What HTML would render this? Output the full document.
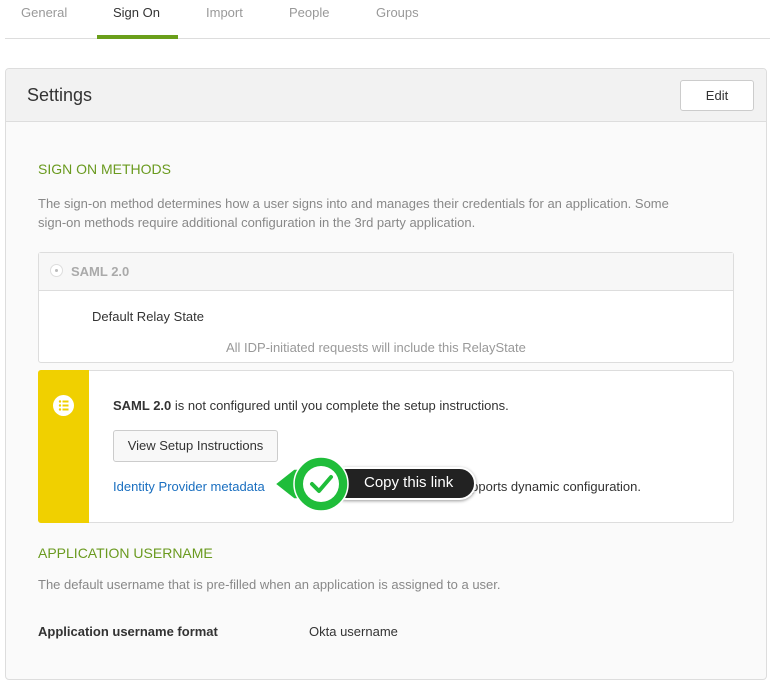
<!DOCTYPE html>
<html><head><style>
*{margin:0;padding:0;box-sizing:border-box}
body{width:775px;height:683px;background:#fff;font-family:"Liberation Sans",sans-serif;position:relative;overflow:hidden;color:#333}
.a{position:absolute;white-space:nowrap}
.tab{font-size:13px;color:#999;top:5px}
</style></head><body>
<div class="a tab" style="left:21px">General</div>
<div class="a tab" style="left:113px;color:#333">Sign On</div>
<div class="a tab" style="left:206px">Import</div>
<div class="a tab" style="left:289px">People</div>
<div class="a tab" style="left:376px">Groups</div>
<div class="a" style="left:5px;top:38px;width:765px;height:1px;background:#ddd"></div>
<div class="a" style="left:97px;top:35px;width:81px;height:4px;background:#6a9f1a"></div>

<div class="a" style="left:5px;top:68px;width:762px;height:612px;border:1px solid #ddd;border-radius:4px;background:#fafafa"></div>
<div class="a" style="left:6px;top:69px;width:760px;height:53px;background:#f2f2f2;border-bottom:1px solid #ddd;border-radius:4px 4px 0 0"></div>
<div class="a" style="left:27px;top:85px;font-size:18px;color:#333">Settings</div>
<div class="a" style="left:680px;top:80px;width:74px;height:31px;background:#fff;border:1px solid #ccc;border-radius:3px;font-size:13px;text-align:center;line-height:29px">Edit</div>

<div class="a" style="left:38px;top:161px;font-size:14px;color:#6a9a1f">SIGN ON METHODS</div>
<div class="a" style="left:38px;top:194px;font-size:13px;color:#888;line-height:19px">The sign-on method determines how a user signs into and manages their credentials for an application. Some<br>sign-on methods require additional configuration in the 3rd party application.</div>

<div class="a" style="left:38px;top:252px;width:696px;height:111px;border:1px solid #ddd;border-radius:3px;background:#fff"></div>
<div class="a" style="left:39px;top:253px;width:694px;height:38px;background:#f7f7f7;border-bottom:1px solid #ddd"></div>
<div class="a" style="left:50px;top:264px;width:13px;height:13px;border:1px solid #ddd;border-radius:50%;background:#fff"></div>
<div class="a" style="left:55px;top:269px;width:3px;height:3px;border-radius:50%;background:#bbb"></div>
<div class="a" style="left:71px;top:264px;font-size:13px;font-weight:bold;color:#aaa">SAML 2.0</div>
<div class="a" style="left:92px;top:309px;font-size:13px;color:#333">Default Relay State</div>
<div class="a" style="left:226px;top:340px;font-size:13px;color:#999">All IDP-initiated requests will include this RelayState</div>

<div class="a" style="left:38px;top:370px;width:696px;height:153px;border:1px solid #ddd;border-radius:3px;background:#fff"></div>
<div class="a" style="left:38px;top:370px;width:51px;height:153px;background:#f0d000;border-radius:3px 0 0 3px"></div>
<div class="a" style="left:53px;top:395px;width:21px;height:21px;border-radius:50%;background:#fff"></div>
<svg class="a" style="left:53px;top:395px" width="21" height="21"><g fill="#f0d000"><circle cx="7" cy="6.5" r="1.2"/><circle cx="7" cy="10.5" r="1.2"/><circle cx="7" cy="14.5" r="1.2"/><rect x="9.5" y="5.5" width="6" height="2"/><rect x="9.5" y="9.5" width="6" height="2"/><rect x="9.5" y="13.5" width="6" height="2"/></g></svg>
<div class="a" style="left:113px;top:398px;font-size:13px;color:#333"><b>SAML 2.0</b> is not configured until you complete the setup instructions.</div>
<div class="a" style="left:113px;top:430px;width:165px;height:32px;border:1px solid #ccc;border-radius:3px;background:#f8f8f8;font-size:13px;text-align:center;line-height:30px">View Setup Instructions</div>
<div class="a" style="left:113px;top:479px;font-size:13px;color:#1a6fc0">Identity Provider metadata</div>
<div class="a" style="right:134px;top:479px;font-size:13px;color:#333">if this application supports dynamic configuration.</div>
<!-- callout -->
<div class="a" style="left:330px;top:467px;width:146px;height:33px;background:#222;border:2px solid #fff;border-radius:17px;box-shadow:0 1px 3px rgba(0,0,0,.4)"></div>
<div class="a" style="left:364px;top:474px;font-size:15px;color:#fff">Copy this link</div>
<svg class="a" style="left:270px;top:455px" width="85" height="60"><path d="M5 29 L24 14 L45 14 L45 44 L24 44 Z" fill="#1fbd3a" stroke="#fff" stroke-width="1.5"/><circle cx="51" cy="29" r="27" fill="#1fbd3a" stroke="#fff" stroke-width="1.5"/><circle cx="51" cy="29" r="18" fill="#fff"/><path d="M42 29 L49 36 L61 22" fill="none" stroke="#1fbd3a" stroke-width="4" stroke-linecap="round" stroke-linejoin="round"/></svg>

<div class="a" style="left:38px;top:545px;font-size:14px;color:#6a9a1f">APPLICATION USERNAME</div>
<div class="a" style="left:38px;top:577px;font-size:13px;color:#888">The default username that is pre-filled when an application is assigned to a user.</div>
<div class="a" style="left:38px;top:624px;font-size:13px;font-weight:bold;color:#333">Application username format</div>
<div class="a" style="left:309px;top:624px;font-size:13px;color:#333">Okta username</div>
</body></html>
